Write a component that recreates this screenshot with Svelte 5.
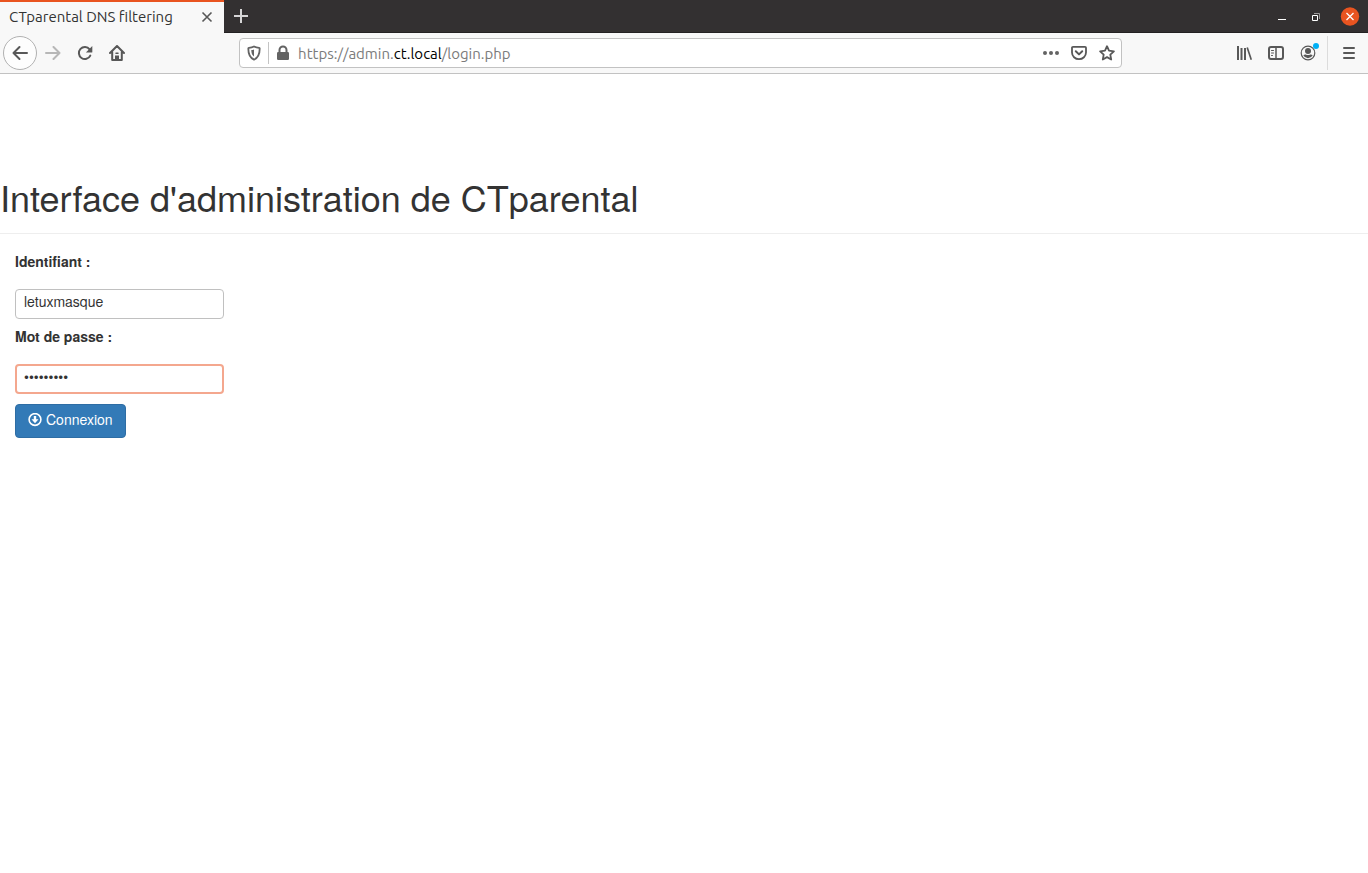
<script>
  let login = $state('letuxmasque');
  let password = $state('motdepass');
  const url = { before: 'https://admin.', domain: 'ct.local', after: '/login.php' };
</script>

<div class="window">
  <header class="tabs">
    <div class="tab">
      <span class="tab-title">CTparental DNS filtering</span>
      <button class="tab-close" aria-label="Fermer l'onglet">
        <svg width="12" height="12" viewBox="0 0 12 12"><path d="M1.5 1.5l9 9M10.5 1.5l-9 9" stroke="#585858" stroke-width="1.6" fill="none" /></svg>
      </button>
    </div>
    <button class="new-tab" aria-label="Nouvel onglet">
      <svg width="16" height="16" viewBox="0 0 16 16"><path d="M8 1v14M1 8h14" stroke="#d6d5d6" stroke-width="2" fill="none" /></svg>
    </button>
    <div class="controls">
      <button aria-label="Réduire">
        <svg width="16" height="16" viewBox="0 0 16 16"><path d="M4 11.5h8" stroke="#fff" fill="none" /></svg>
      </button>
      <button aria-label="Restaurer">
        <svg width="16" height="16" viewBox="0 0 16 16" fill="none"><path d="M6 5.500h5.500v5.500" stroke="#9b999a" /><path d="M4.500 7.500h5v5h-5z" stroke="#fff" /></svg>
      </button>
      <button aria-label="Fermer">
        <svg width="20" height="20" viewBox="0 0 20 20"><circle cx="10" cy="10.500" r="9.200" fill="#e95420" /><path d="M6.500 7l7 7M13.500 7l-7 7" stroke="#fff" stroke-width="1.300" /></svg>
      </button>
    </div>
  </header>

  <nav class="toolbar">
    <div class="group">
      <button class="back" aria-label="Page précédente">
        <svg width="16" height="16" viewBox="0 0 16 16" class="line"><path d="M15 8H1.500M7.500 2l-6 6 6 6" /></svg>
      </button>
      <button class="disabled" aria-label="Page suivante" disabled>
        <svg width="16" height="16" viewBox="0 0 16 16" class="line"><path d="M1 8h13.500M8.500 2l6 6-6 6" /></svg>
      </button>
      <button aria-label="Actualiser">
        <svg width="16" height="16" viewBox="0 0 16 16"><path d="M13.300 10.600A6 6 0 1 1 12.600 4.300" fill="none" stroke="#585858" stroke-width="2" stroke-linecap="round" /><path d="M15.300 1v6a.6.6 0 0 1-.6.6H8.900z" fill="#585858" /></svg>
      </button>
      <button aria-label="Accueil">
        <svg width="16" height="16" viewBox="0 0 16 16" class="line"><path d="M1 8l7-7 7 7M3.200 7v8h9.600V7" /><path d="M6 15v-4.500h4V15z" fill="#585858" stroke="none" /><path d="M7 8.300h2" stroke-width="1.500" /></svg>
      </button>
    </div>

    <div class="space"></div>

    <div class="urlbar">
      <button class="shield" aria-label="Protection contre le pistage">
        <svg width="14" height="16" viewBox="0 0 14 16"><path d="M7 1.500C5.500 2.300 3.500 2.700 1.900 2.800 1.500 2.900 1.300 3.100 1.300 3.500 1.300 8.500 2 12.500 7 14.600 12 12.500 12.700 8.500 12.700 3.500c0-.4-.2-.6-.6-.7C10.500 2.700 8.500 2.300 7 1.500z" fill="none" stroke="#636363" stroke-width="1.800" /><path d="M7 4.400v7.200C5 10.200 4.400 8.300 4.300 5.100 5.300 5 6.200 4.800 7 4.400z" fill="#636363" /></svg>
      </button>
      <span class="url-divider"></span>
      <button class="lock" aria-label="Connexion sécurisée">
        <svg width="14" height="16" viewBox="0 0 14 16"><path d="M3.500 8V5a3.500 3.500 0 0 1 7 0v3" fill="none" stroke="#636363" stroke-width="2" /><rect x="1" y="7" width="12" height="8" rx="1.200" fill="#636363" /></svg>
      </button>
      <span class="url">{url.before}<b>{url.domain}</b>{url.after}</span>
      <div class="actions">
        <button aria-label="Actions de la page">
          <svg width="16" height="16" viewBox="0 0 16 16" fill="#636363"><circle cx="2" cy="8" r="2" /><circle cx="8" cy="8" r="2" /><circle cx="14" cy="8" r="2" /></svg>
        </button>
        <button aria-label="Enregistrer dans Pocket">
          <svg width="16" height="16" viewBox="0 0 16 16" class="line"><path d="M2 1.800h12a1 1 0 0 1 1 1v4.700a7 6.700 0 0 1-14 0V2.800a1 1 0 0 1 1-1z" stroke-width="1.800" /><path d="M4.800 6.300L8 9.400l3.200-3.100" /></svg>
        </button>
        <button aria-label="Marquer cette page">
          <svg width="16" height="16" viewBox="0 0 16 16" class="line"><path d="M8 1.200l2 4.500 4.900.6-3.600 3.300.9 4.900L8 12.100l-4.200 2.400.9-4.900L1.100 6.300 6 5.700z" stroke-width="1.800" /></svg>
        </button>
      </div>
    </div>

    <div class="space"></div>

    <div class="group">
      <button aria-label="Bibliothèque">
        <svg width="16" height="16" viewBox="0 0 16 16" fill="none" stroke="#585858"><path d="M2 1v14M5.500 3v12M9 3v12" stroke-width="2" /><path d="M11.200 2.500L15.300 14.800" stroke-width="1.700" /></svg>
      </button>
      <button aria-label="Panneaux latéraux">
        <svg width="16" height="16" viewBox="0 0 16 16" class="line"><rect x="1" y="2" width="14" height="12" rx="2" /><path d="M8 2v12" stroke-width="1.500" /><path d="M3.500 5.500h2M3.500 8h2M3.500 10.500h1" stroke-width="1" /></svg>
      </button>
      <button class="account" aria-label="Compte">
        <svg width="16" height="16" viewBox="0 0 16 16"><circle cx="8" cy="8" r="6.800" fill="none" stroke="#585858" stroke-width="1.200" /><circle cx="8" cy="6" r="3" fill="#585858" /><path d="M3.300 10.300c.8-.8 1.700-1 2.500-.8 1.400.7 3 .7 4.400 0 .8-.2 1.700 0 2.500.8a5.300 5.300 0 0 1-9.400 0z" fill="#585858" /></svg>
        <span class="dot"></span>
      </button>
    </div>
    <span class="menu-divider"></span>
    <button class="menu" aria-label="Ouvrir le menu">
      <svg width="16" height="16" viewBox="0 0 16 16" class="line"><path d="M3 3h10M3 8h10M3 13h10" /></svg>
    </button>
  </nav>

  <main>
    <h1>Interface d'administration de CTparental</h1>
    <form onsubmit={(e) => e.preventDefault()}>
      <label for="login">Identifiant :</label>
      <input id="login" type="text" bind:value={login} />
      <label for="password">Mot de passe :</label>
      <input id="password" class="active" type="password" bind:value={password} />
      <button class="submit" type="submit">
        <svg width="14" height="14" viewBox="0 0 14 14"><circle cx="7" cy="6.500" r="5.900" fill="none" stroke="#fff" stroke-width="1.600" /><path d="M5.800 3h2.400v3.200h2.300L7 10.200 3.500 6.200h2.300z" fill="#fff" /></svg>
        <span>Connexion</span>
      </button>
    </form>
  </main>
</div>

<style>
  :global(body) {
    margin: 0;
    background: #fff;
  }
  .window {
    font-family: Ubuntu, 'Noto Sans', sans-serif;
    color: #333;
  }
  .window * {
    box-sizing: border-box;
  }
  button {
    display: flex;
    align-items: center;
    justify-content: center;
    padding: 0;
    border: 0;
    background: none;
    font: inherit;
  }
  svg {
    display: block;
    flex: none;
  }
  .line {
    fill: none;
    stroke: #585858;
    stroke-width: 2;
    stroke-linecap: round;
    stroke-linejoin: round;
  }

  .tabs {
    display: flex;
    height: 33px;
    background: #333031;
    border-bottom: 1px solid #232122;
  }
  .tab {
    display: flex;
    align-items: center;
    justify-content: space-between;
    width: 224px;
    height: 33px;
    padding: 0 11px 2px 9px;
    border-top: 2px solid #e95420;
    background: #f8f8f8;
  }
  .tab-title {
    font-size: 15px;
    line-height: 20px;
    white-space: nowrap;
  }
  .new-tab {
    width: 34px;
  }
  .controls {
    display: flex;
    align-items: center;
    margin-left: auto;
    padding-right: 1px;
  }
  .controls button {
    width: 34px;
    height: 32px;
  }

  .toolbar {
    display: flex;
    align-items: center;
    height: 41px;
    padding: 0 3px;
    background: #f8f8f8;
    border-bottom: 1px solid #c2c2c2;
  }
  .group {
    display: flex;
    align-items: center;
  }
  .group button {
    width: 32px;
    height: 32px;
  }
  .group .back {
    width: 34px;
    height: 34px;
    border: 1px solid #b1b1b1;
    border-radius: 50%;
    background: #fdfdfd;
  }
  .disabled {
    opacity: 0.4;
  }
  .space {
    flex: 11 1 0;
  }
  .urlbar {
    display: flex;
    align-items: center;
    flex: 90 1 0;
    min-width: 0;
    height: 30px;
    padding: 0 6px 0 7px;
    background: #fff;
    border: 1px solid #c2c2c2;
    border-radius: 4px;
  }
  .url-divider {
    width: 1px;
    height: 22px;
    margin: 0 7px;
    background: #c4c4c4;
  }
  .url {
    flex: 1;
    min-width: 0;
    padding: 2px 0 0 8px;
    overflow: hidden;
    font-size: 15px;
    line-height: 20px;
    color: #7b7b7b;
    white-space: nowrap;
  }
  .url b {
    font-weight: 400;
    color: #000;
  }
  .actions {
    display: flex;
    gap: 12px;
  }
  .account {
    position: relative;
  }
  .dot {
    position: absolute;
    top: 6px;
    right: 5px;
    width: 6px;
    height: 6px;
    border-radius: 50%;
    background: #00b0f6;
  }
  .menu-divider {
    width: 1px;
    height: 34px;
    margin-left: 3px;
    background: #dcdcdc;
  }
  .menu {
    width: 32px;
    height: 32px;
    margin-left: 5px;
  }

  main {
    padding-top: 103px;
    font-family: 'Nimbus Sans L', 'TeX Gyre Heros', 'Liberation Sans', Arial, sans-serif;
    font-size: 14px;
    line-height: 20px;
  }
  h1 {
    margin: 0 0 17px;
    padding-bottom: 16px;
    border-bottom: 1px solid #eee;
    font-size: 36px;
    font-weight: 400;
    line-height: 40px;
  }
  form {
    display: flex;
    flex-direction: column;
    align-items: flex-start;
    padding: 0 15px;
  }
  label {
    margin-bottom: 18px;
    font-weight: 700;
  }
  input {
    width: 209px;
    height: 30px;
    margin-bottom: 7px;
    padding: 0 8px 6px;
    border: 1px solid #c0c0c0;
    border-radius: 4px;
    outline: 0;
    background: #fff;
    color: #333;
    font: inherit;
  }
  input.active {
    margin-bottom: 10px;
    padding: 0 7px 6px;
    border: 2px solid #f4a78e;
  }
  .submit {
    height: 34px;
    padding: 0 12px 2px;
    border: 1px solid #2e6da4;
    border-radius: 4px;
    background: #337ab7;
    color: #fff;
  }
  .submit span {
    padding: 0 0 2px 4px;
  }
</style>
